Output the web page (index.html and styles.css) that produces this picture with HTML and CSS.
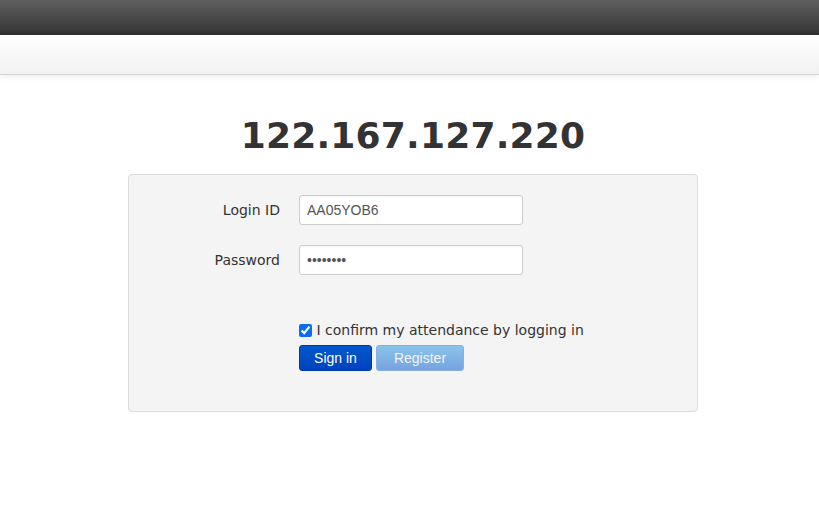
FILE: index.html
```html
<!DOCTYPE html>
<html>
<head>
<meta charset="utf-8">
<link rel="stylesheet" href="styles.css">
</head>
<body>
<div class="topbar"></div>
<div class="navbar"></div>
<main class="main">
  <h1 class="title">122.167.127.220</h1>
  <form class="panel">
    <div class="row">
      <label class="label" for="lid">Login ID</label>
      <input class="field" id="lid" type="text" value="AA05YOB6">
    </div>
    <div class="row">
      <label class="label" for="pwd">Password</label>
      <input class="field" id="pwd" type="password" value="abcdefgh">
    </div>
    <div class="actions">
      <label class="confirm"><input type="checkbox" class="check" checked> I confirm my attendance by logging in</label>
      <div class="buttons">
        <button type="button" class="btn btn-primary">Sign in</button>
        <button type="button" class="btn btn-secondary">Register</button>
      </div>
    </div>
  </form>
</main>
</body>
</html>
```

FILE: styles.css
```css
html, body {
  margin: 0;
  padding: 0;
  background: #fff;
  font-family: "DejaVu Sans", Verdana, sans-serif;
  color: #333;
}
.topbar {
  height: 35px;
  background: linear-gradient(#5f5f5f, #3a3a3a 85%, #2e2e2e);
}
.navbar {
  height: 39px;
  background: linear-gradient(#ffffff, #f1f1f1);
  border-bottom: 1px solid #d4d4d4;
  box-shadow: 0 2px 6px rgba(0,0,0,0.07);
}
.main {
  width: 570px;
  margin: 0 auto;
  padding: 37px 0 0 7px;
}
.title {
  margin: 0 0 14px;
  text-align: center;
  font-family: "DejaVu Sans", Verdana, sans-serif;
  font-weight: bold;
  font-size: 36px;
  line-height: 48px;
  color: #333;
  letter-spacing: 0.2px;
}
.panel {
  box-sizing: border-box;
  width: 570px;
  height: 238px;
  background: #f4f4f4;
  border: 1px solid #dcdcdc;
  border-radius: 4px;
  padding: 20px 0 0 0;
}
.row {
  display: flex;
  align-items: center;
  margin-bottom: 20px;
}
.label {
  width: 151px;
  text-align: right;
  padding-right: 19px;
  font-size: 14px;
  color: #333;
}
.field {
  box-sizing: border-box;
  width: 224px;
  height: 30px;
  margin: 0;
  border: 1px solid #cccccc;
  border-radius: 3px;
  background: #fff;
  padding: 0 7px;
  font-family: "Liberation Sans", Arial, sans-serif;
  font-size: 14px;
  color: #555;
  box-shadow: inset 0 1px 1px rgba(0,0,0,0.04);
}
.actions {
  margin-left: 170px;
  padding-top: 25px;
}
.confirm {
  display: flex;
  align-items: center;
  font-size: 14px;
  color: #333;
  height: 20px;
  white-space: pre;
}
.check {
  margin: 0;
  width: 13px;
  height: 13px;
  accent-color: #0b6ef0;
}
.buttons {
  display: flex;
  gap: 4px;
  margin-top: 5px;
}
.btn {
  box-sizing: border-box;
  height: 26px;
  border-radius: 3px;
  font-family: "Liberation Sans", Arial, sans-serif;
  font-size: 14px;
  color: #fff;
  padding: 0;
  cursor: pointer;
}
.btn-primary {
  width: 73px;
  background: linear-gradient(#0058cc, #0042c0);
  border: 1px solid #0038a0;
}
.btn-secondary {
  width: 88px;
  background: linear-gradient(#88c4ea, #78a2e0);
  border: 1px solid #85b0e0;
  color: #f2f6fc;
}
```
